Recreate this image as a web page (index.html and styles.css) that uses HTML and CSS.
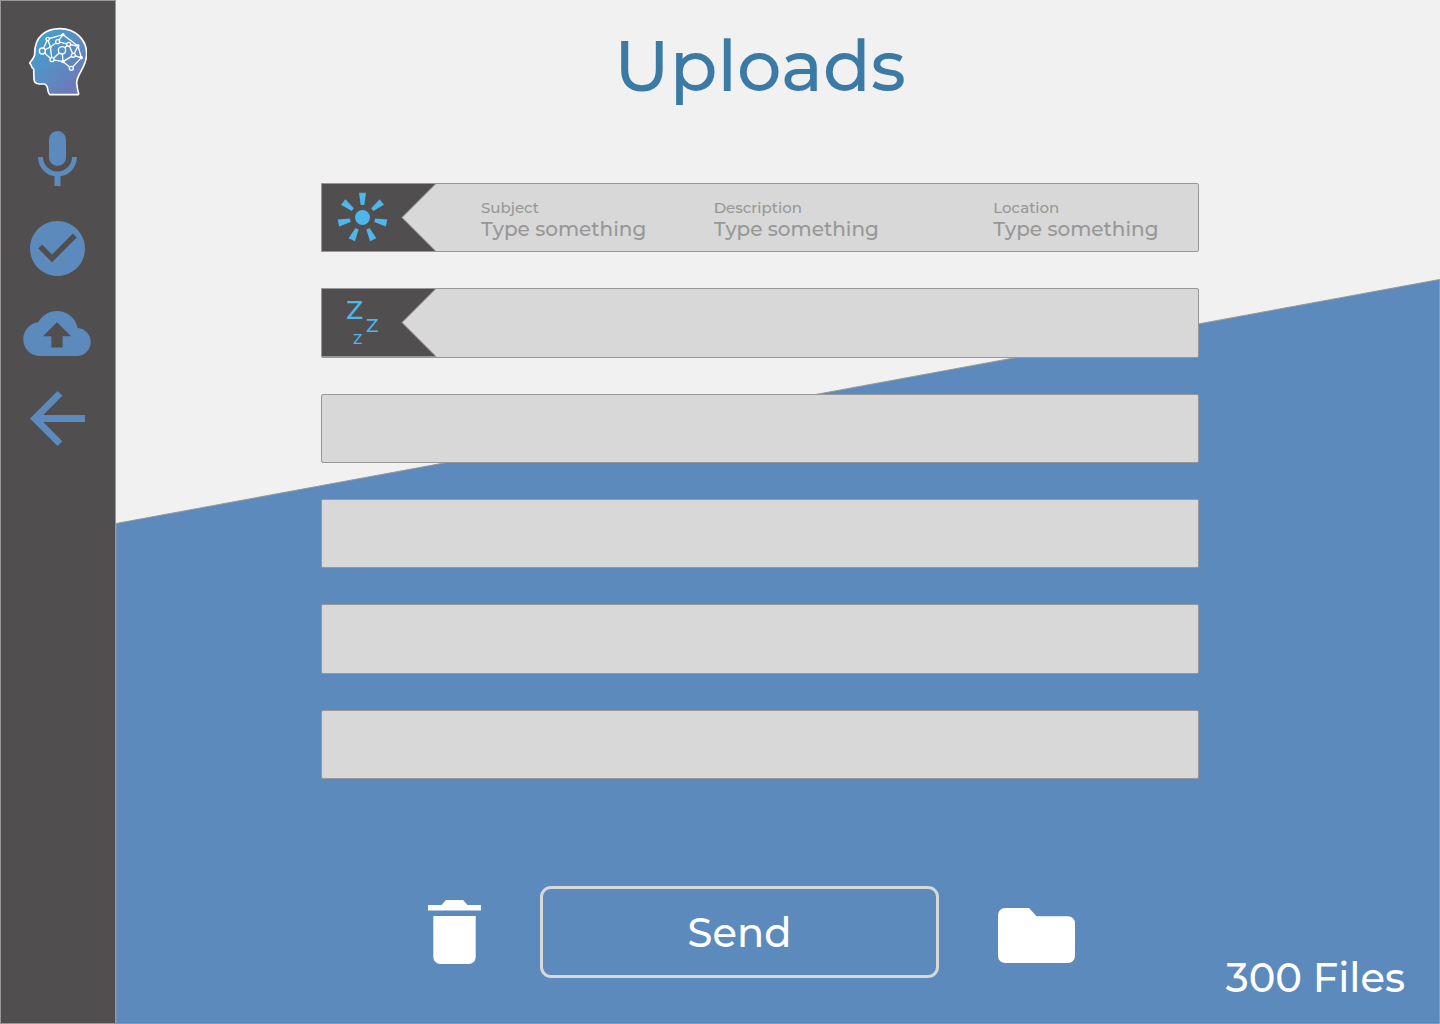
FILE: index.html
```html
<!DOCTYPE html>
<html lang="en">
<head>
<meta charset="utf-8">
<meta name="viewport" content="width=device-width, initial-scale=1">
<title>Uploads</title>
<link rel="stylesheet" href="styles.css">
</head>
<body>
<div class="app">
  <nav class="sidebar" aria-label="Main">
    <a href="#" aria-label="Home">
      <svg width="60" height="69" viewBox="81 84 180 207">
        <defs>
          <linearGradient id="head" x1="0" y1="0" x2="1" y2="1">
            <stop offset="0.15" stop-color="#42a0cb"/>
            <stop offset="0.9" stop-color="#7276b8"/>
          </linearGradient>
        </defs>
        <path fill="url(#head)" stroke="#fff" stroke-width="5" stroke-linejoin="round" d="M150 287Q145 285 143 270Q141 256 132 255L118 255Q102 254 102 240L101 210Q99 207 96 206Q94 198 89 192Q101 178 104 168C102 110 140 89 180 89C228 89 260 124 260 165C260 205 230 225 230 252Q232 272 236 284Q236 287 232 287Z"/>
        <path fill="none" stroke="#fff" stroke-width="4" d="M143 120L189 107L234 141L206 136L173 128L189 107M173 128L151 144L127 156L143 120L151 144L156 182L127 156M206 136L220 169L234 141L244 176L220 169L189 188L214 208L244 176M189 188L156 182L186 154L189 188M186 154L206 136"/>
        <g fill="#5593c6" stroke="#fff" stroke-width="4">
          <circle cx="143" cy="120" r="5"/><circle cx="173" cy="128" r="6"/><circle cx="206" cy="136" r="6"/>
          <circle cx="127" cy="156" r="9"/><circle cx="186" cy="154" r="11"/><circle cx="220" cy="169" r="6"/>
          <circle cx="156" cy="182" r="6"/><circle cx="214" cy="208" r="6"/>
        </g>
        <g fill="#fff">
          <circle cx="189" cy="107" r="5"/><circle cx="234" cy="141" r="5"/><circle cx="244" cy="176" r="5"/>
          <circle cx="189" cy="188" r="5"/><circle cx="151" cy="144" r="4"/>
        </g>
      </svg>
    </a>
    <a href="#" aria-label="Record">
      <svg width="39" height="55" viewBox="0 0 39 55">
        <rect x="11" width="17" height="35" rx="8.5"/>
        <path d="M0 26H5A14.5 14.5 0 0 0 34 26H39A19.5 19.5 0 0 1 22.5 45.3V55H16.500V45.3A19.500 19.500 0 0 1 0 26Z"/>
      </svg>
    </a>
    <a href="#" aria-label="Completed">
      <svg width="55" height="55" viewBox="2 2 20 20"><path d="M12 2C6.480 2 2 6.480 2 12s4.480 10 10 10 10-4.480 10-10S17.520 2 12 2zm-2 15l-5-5 1.410-1.410L10 14.170l7.590-7.590L19 8l-9 9z"/></svg>
    </a>
    <a href="#" aria-label="Uploads" aria-current="page">
      <svg width="68" height="45" viewBox="0 4 24 16"><path d="M19.350 10.040C18.670 6.590 15.640 4 12 4 9.110 4 6.600 5.640 5.350 8.040 2.340 8.360 0 10.910 0 14c0 3.310 2.690 6 6 6h13c2.760 0 5-2.240 5-5 0-2.640-2.050-4.780-4.650-4.960zM14 13v4h-4v-4H7l5-5 5 5h-3z"/></svg>
    </a>
    <a href="#" aria-label="Back">
      <svg width="55" height="55" viewBox="4 4 16 16"><path d="M20 11H7.830l5.590-5.590L12 4l-8 8 8 8 1.410-1.410L7.830 13H20v-2z"/></svg>
    </a>
  </nav>

  <main class="main">
    <svg class="backdrop" viewBox="0 0 1324 1024" preserveAspectRatio="none" aria-hidden="true">
      <path d="M0 523.5L1323.500 279.500V1023.500H0Z"/>
    </svg>

    <h1 class="title">Uploads</h1>

    <ul class="files">
      <li class="file">
        <svg class="flag" viewBox="0 0 116 69" role="img" aria-label="Active">
          <path class="flag-shape" d="M.5.5H115L81 34.500L115 68.500H.5Z"/>
          <g transform="translate(41.5 34.5)">
            <circle r="7.500"/>
            <path id="ray" d="M-3.500-24.700H3.500L1.800-12.500H-1.800Z"/>
            <use href="#ray" transform="rotate(51.430)"/>
            <use href="#ray" transform="rotate(102.860)"/>
            <use href="#ray" transform="rotate(154.290)"/>
            <use href="#ray" transform="rotate(205.710)"/>
            <use href="#ray" transform="rotate(257.140)"/>
            <use href="#ray" transform="rotate(308.570)"/>
          </g>
        </svg>
        <div class="fields">
          <div class="field">
            <label for="subject">Subject</label>
            <input id="subject" type="text" placeholder="Type something">
          </div>
          <div class="field">
            <label for="description">Description</label>
            <input id="description" type="text" placeholder="Type something">
          </div>
          <div class="field">
            <label for="location">Location</label>
            <input id="location" type="text" placeholder="Type something">
          </div>
        </div>
      </li>
      <li class="file">
        <svg class="flag" viewBox="0 0 116 69" role="img" aria-label="Sleeping">
          <path class="flag-shape" d="M.5.5H115L81 34.500L115 68.500H.5Z"/>
          <text x="25" y="31" font-size="26">Z</text>
          <text x="45" y="44" font-size="19">Z</text>
          <text x="32" y="56" font-size="14">Z</text>
        </svg>
      </li>
      <li class="file"></li>
      <li class="file"></li>
      <li class="file"></li>
      <li class="file"></li>
    </ul>

    <div class="actions">
      <button class="icon-button" type="button" aria-label="Delete">
        <svg width="53" height="64" viewBox="0 0 53 64"><path d="M0 5H13.500L18 0H35L39.500 5H53V10.500H0ZM5.300 16H47.700V57A7 7 0 0 1 40.700 64H12.300A7 7 0 0 1 5.300 57Z"/></svg>
      </button>
      <button class="send" type="button">Send</button>
      <button class="icon-button" type="button" aria-label="Open folder">
        <svg width="77" height="61" viewBox="0 -6 77 61"><path d="M7 0H31L38.500 8.300H70A7 7 0 0 1 77 15.300V48A7 7 0 0 1 70 55H7A7 7 0 0 1 0 48V7A7 7 0 0 1 7 0Z"/></svg>
      </button>
    </div>

    <p class="count">300 Files</p>
  </main>
</div>
</body>
</html>
```
FILE: styles.css
```css
* {
  box-sizing: border-box;
}

body {
  margin: 0;
  background: #f1f1f1;
  font-family: Montserrat, Inter, "Open Sans", sans-serif;
  font-weight: 500;
}

svg {
  display: block;
}

.app {
  display: flex;
  min-height: 100vh;
}

.sidebar {
  flex: none;
  display: flex;
  flex-direction: column;
  align-items: center;
  gap: 35px;
  width: 116px;
  padding: 26px 2px 0 0;
  background: #504e4e;
  border: 1px solid #979797;
  fill: #5c8abc;
}

/* The side columns hold the list clear of the file count. */
.main {
  position: relative;
  isolation: isolate;
  flex: 1;
  display: grid;
  grid-template-columns: 205px minmax(0, 1fr) 241px;
  grid-template-rows: 183px auto 1fr;
}

.backdrop {
  position: absolute;
  z-index: -1;
  inset: 0;
  width: 100%;
  height: 100%;
  fill: #5c8abc;
  stroke: #979797;
}

.backdrop path {
  vector-effect: non-scaling-stroke;
}

.title {
  grid-column: 2;
  margin: 0;
  padding-top: 24px;
  color: #3c7aa6;
  font-size: 70px;
  font-weight: 500;
  line-height: 84px;
  text-align: center;
}

.files {
  grid-column: 2;
  display: grid;
  grid-auto-rows: 1fr;
  gap: 36px;
  min-height: 596px;
  margin: 0;
  padding: 0;
  list-style: none;
}

.file {
  display: flex;
  align-items: center;
  background: #d8d8d8;
  border: 1px solid #979797;
  border-radius: 2px;
}

.flag {
  flex: none;
  width: 116px;
  height: 69px;
  margin: -1px;
  fill: #4db6ea;
  font-weight: 500;
}

.flag-shape {
  fill: #504e4e;
  stroke: #979797;
}

.fields {
  flex: 1;
  display: grid;
  grid-template-columns: 233fr 280fr 205fr;
  padding-left: 45px;
}

.field {
  display: flex;
  flex-direction: column;
  min-width: 0;
  padding-top: 4px;
  color: #979797;
}

.field label {
  font-size: 15px;
  line-height: 18px;
}

.field input {
  width: 100%;
  height: 24px;
  padding: 0;
  border: 0;
  background: none;
  color: inherit;
  font: inherit;
  font-size: 20px;
}

.field input::placeholder {
  color: #979797;
  opacity: 1;
}

.actions {
  grid-column: 2;
  align-self: end;
  display: flex;
  align-items: center;
  justify-content: center;
  gap: 59px;
  padding: 0 17px 46px 0;
}

.icon-button {
  padding: 0;
  border: 0;
  background: none;
  fill: #fff;
}

.send {
  width: 399px;
  height: 92px;
  border: 3px solid #d8d8d8;
  border-radius: 11px;
  background: none;
  color: #fff;
  font: inherit;
  font-size: 40px;
}

.count {
  grid-column: 3;
  align-self: end;
  margin: 0;
  padding: 0 35px 21px 0;
  color: #fff;
  font-size: 40px;
  line-height: 50px;
  text-align: right;
}
```
